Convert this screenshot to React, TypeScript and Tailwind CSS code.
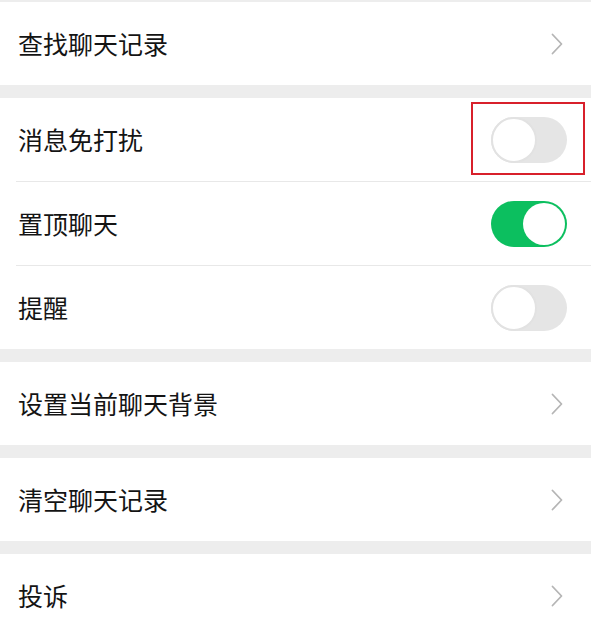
const font = 'font-["Noto_Sans_CJK_SC","Noto_Sans",sans-serif]';

function Chevron() {
  return (
    <svg width="12" height="22" viewBox="0 0 12 22" fill="none" className="shrink-0">
      <path d="M1.5 1.5 L10.5 11 L1.5 20.5" stroke="#b5b5b5" strokeWidth="1.8" strokeLinecap="round" strokeLinejoin="round" />
    </svg>
  );
}

function Toggle({ on }: { on: boolean }) {
  if (on) {
    return (
      <div className="flex h-[46px] w-[76px] items-center justify-end rounded-full bg-[#0cbf5f] p-[2px]">
        <div className="h-[42px] w-[42px] rounded-full bg-white" />
      </div>
    );
  }
  return (
    <div className="flex h-[46px] w-[76px] items-center rounded-full bg-[#e5e5e5]">
      <div className="h-[46px] w-[46px] rounded-full border-2 border-[#e2e2e2] bg-white" />
    </div>
  );
}

function LinkRow({ label }: { label: string }) {
  return (
    <div className="flex h-[83px] items-center justify-between bg-white pl-[18px] pr-[28px]">
      <span className="text-[25px] leading-none text-[#141414]">{label}</span>
      <Chevron />
    </div>
  );
}

function SwitchRow({ label, on, marked }: { label: string; on: boolean; marked?: boolean }) {
  return (
    <div className="flex h-[83px] items-center justify-between bg-white pl-[18px] pr-[24px]">
      <span className="text-[25px] leading-none text-[#141414]">{label}</span>
      <div className="relative">
        <Toggle on={on} />
        {marked ? (
          <div className="pointer-events-none absolute -left-[20px] -right-[18px] -top-[15px] -bottom-[12px] border-2 border-[#d8202b]" />
        ) : null}
      </div>
    </div>
  );
}

function Divider() {
  return (
    <div className="bg-white pl-[16px]">
      <div className="h-px bg-[#e8e8e8]" />
    </div>
  );
}

function Gap() {
  return <div className="h-[13px] bg-[#ededed]" />;
}

export default function App() {
  return (
    <div className={`h-[635px] w-[600px] overflow-hidden bg-white ${font}`}>
      <div className="w-[591px]">
        <div className="h-[2px] bg-[#ededed]" />
        <LinkRow label="查找聊天记录" />
        <Gap />
        <SwitchRow label="消息免打扰" on={false} marked />
        <Divider />
        <SwitchRow label="置顶聊天" on />
        <Divider />
        <SwitchRow label="提醒" on={false} />
        <Gap />
        <LinkRow label="设置当前聊天背景" />
        <Gap />
        <LinkRow label="清空聊天记录" />
        <Gap />
        <LinkRow label="投诉" />
      </div>
    </div>
  );
}
